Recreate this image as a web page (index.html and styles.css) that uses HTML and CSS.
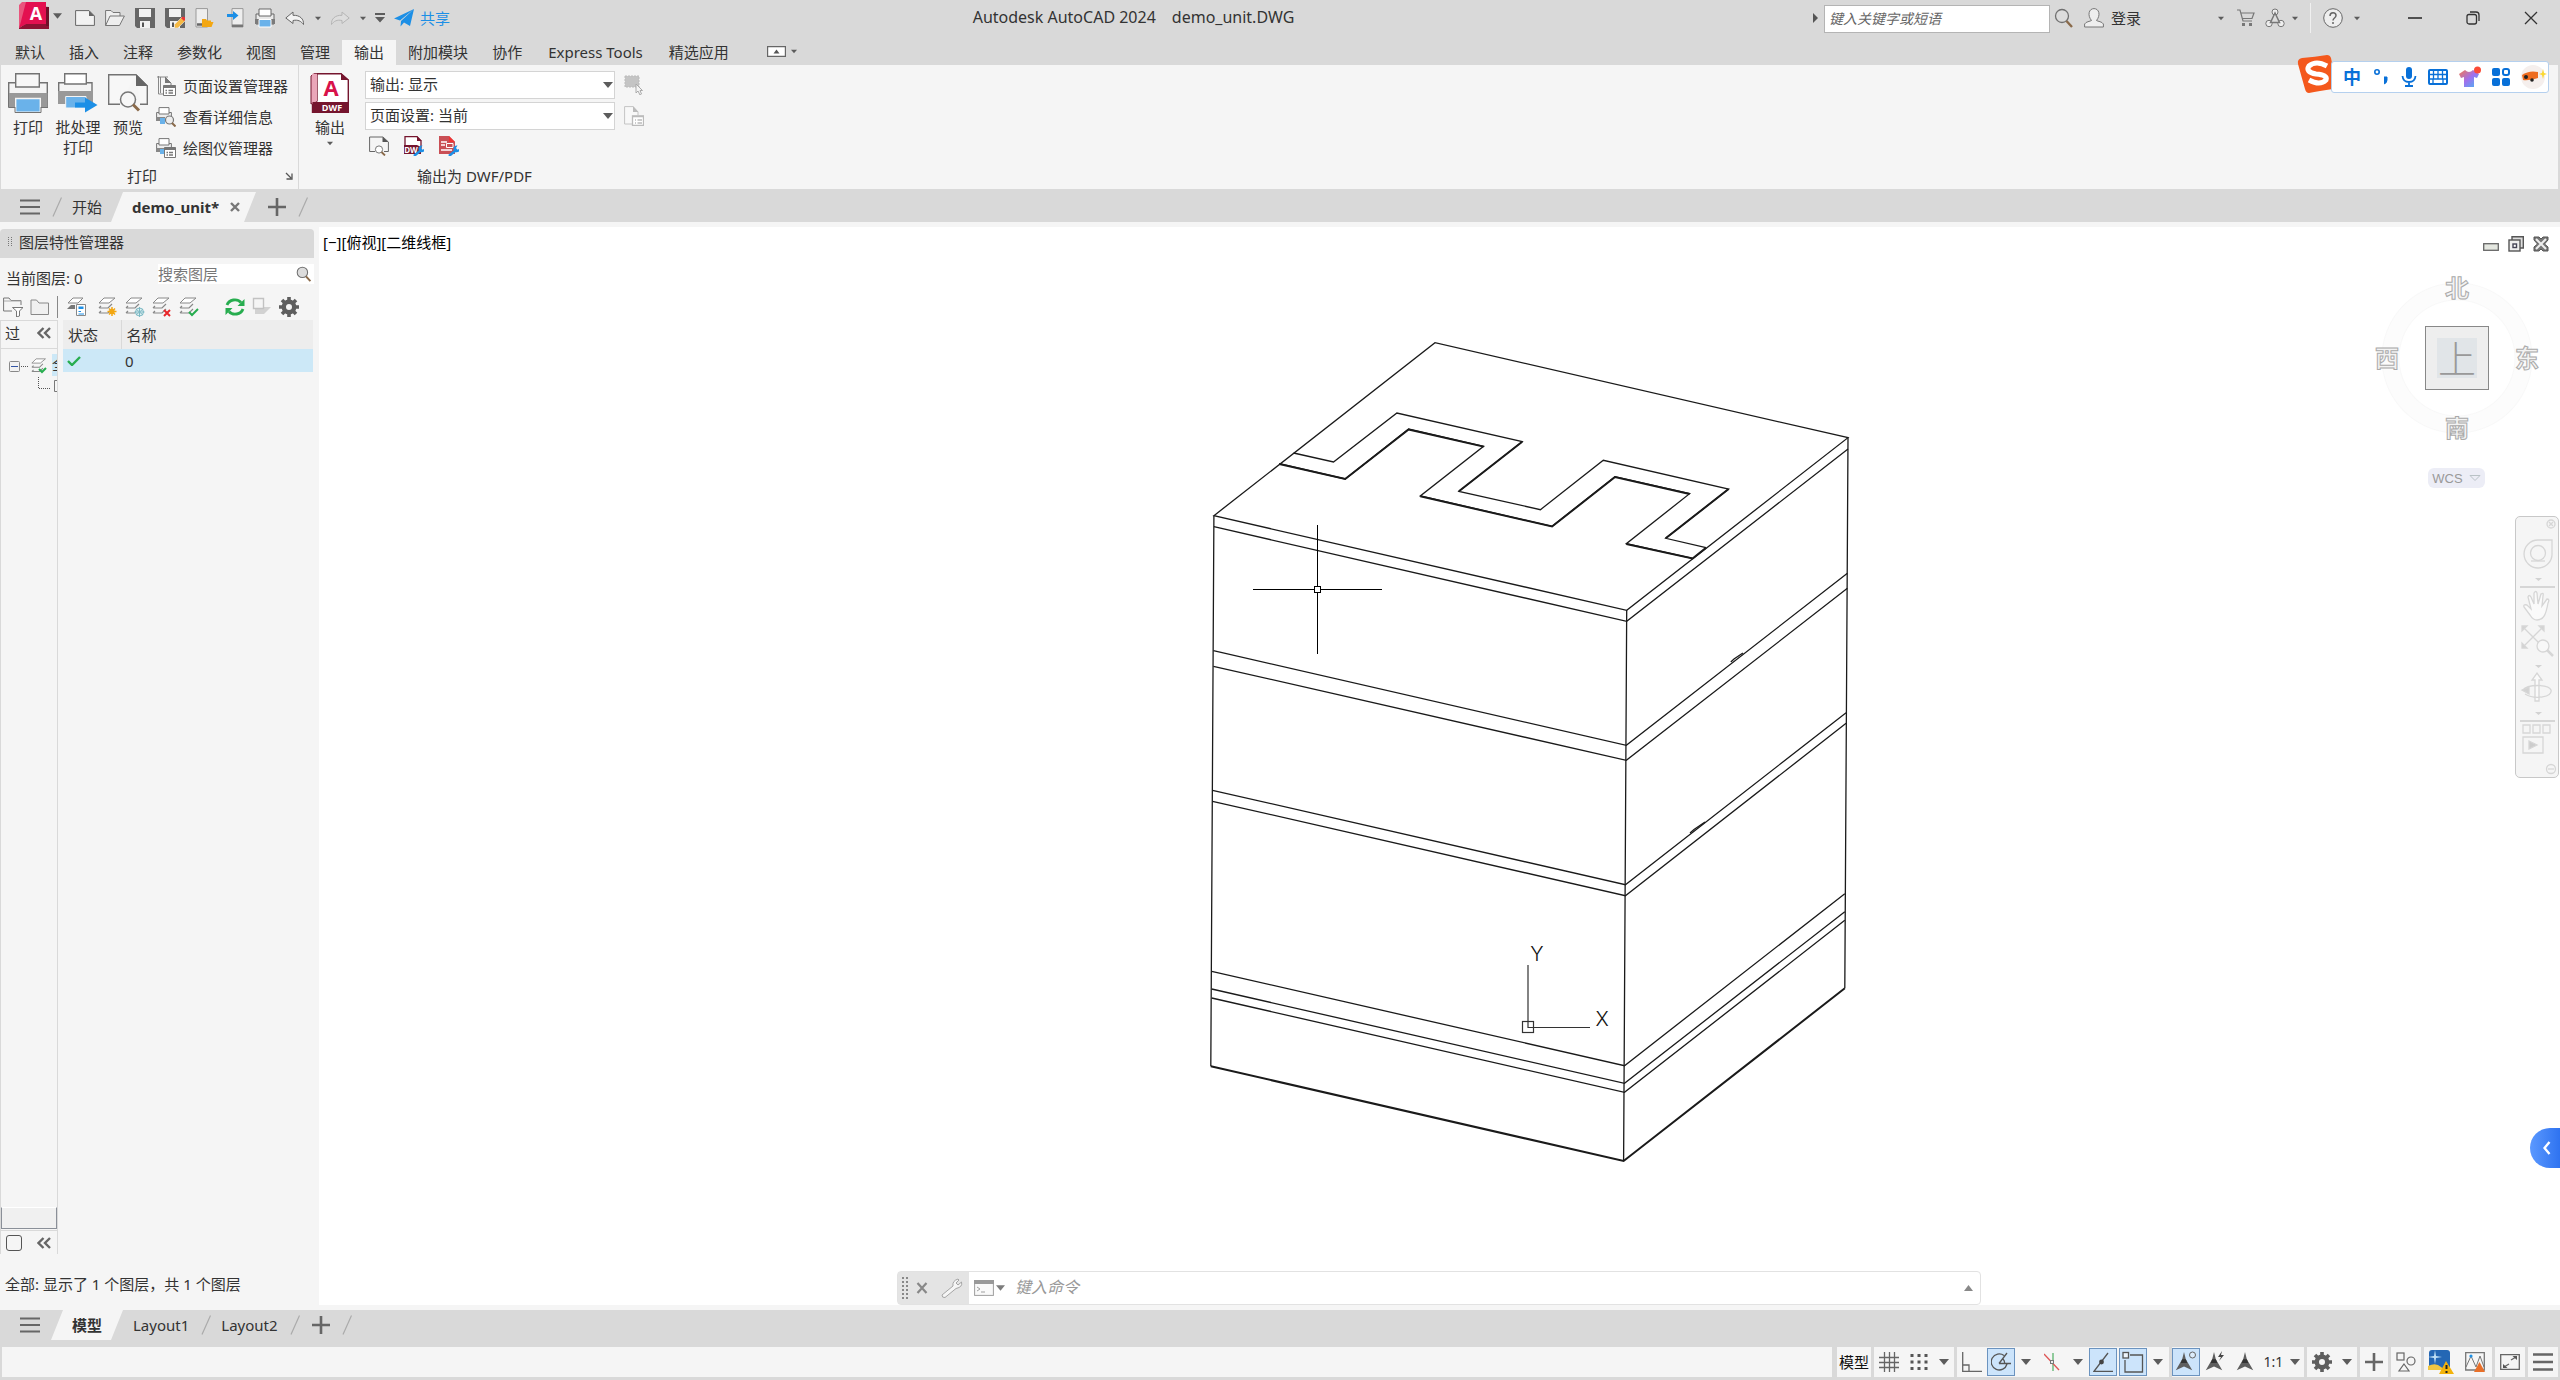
FILE: index.html
```html
<!DOCTYPE html>
<html lang="zh-CN">
<head>
<meta charset="utf-8">
<title>Autodesk AutoCAD 2024 - demo_unit.DWG</title>
<link rel="stylesheet" href="styles.css">
</head>
<body>
<svg class="sprite" aria-hidden="true">
  <symbol id="caret" viewBox="0 0 10 6"><path d="M0 0H10L5 6Z" fill="#5c5c5c"/></symbol>
  <symbol id="menu" viewBox="0 0 20 16"><path d="M0 1.5H20M0 8H20M0 14.5H20" stroke="#666" stroke-width="2.2"/></symbol>
  <symbol id="plus" viewBox="0 0 18 18"><path d="M9 0V18M0 9H18" stroke="#666" stroke-width="2.6"/></symbol>
  <symbol id="slash" viewBox="0 0 10 20"><path d="M9.500 .5L1 19.500" stroke="#aaa" stroke-width="1.200"/></symbol>
  <symbol id="new" viewBox="0 0 20 20"><path d="M.6 2.600H14L19.400 8V17.400H.6Z" fill="#f2f2f2" stroke="#666"/><path d="M14 2.600V8H19.400Z" fill="#666"/></symbol>
  <symbol id="open" viewBox="0 0 20 20"><path d="M.6 17.500V2.500H6L8 4.500H15V8M.6 17.500L5 8H19.400L14.500 17.500Z" fill="#eee" stroke="#777"/></symbol>
  <symbol id="save" viewBox="0 0 20 20"><path d="M0 0H20V20H2L0 18Z" fill="#666"/><path d="M4 1H16V9H4Z" fill="#f2f2f2"/><path d="M5 13H15V20H5Z" fill="#f2f2f2"/><path d="M7 14.500H9V19H7Z" fill="#555"/></symbol>
  <symbol id="saveas" viewBox="0 0 20 20"><use href="#save"/><path d="M17 9L20.500 12.500L13 20H9.500V16.500Z" fill="#f5b944" stroke="#e9e9e9" stroke-width=".6"/><path d="M16 10L19 13L20 12V9.500L18 8.500Z" fill="#e33"/></symbol>
  <symbol id="docopen" viewBox="0 0 20 20"><path d="M1 .6H12.500V19H1Z" fill="#eee" stroke="#999"/><path d="M2 16.500H10" stroke="#666" stroke-width="2.500"/><path d="M7 11H11L12 12.500H16V14H18.500L16.500 19H7Z" fill="#f3a712"/></symbol>
  <symbol id="tophone" viewBox="0 0 20 20"><path d="M7 .6H18V19H7Z" fill="#eee" stroke="#999"/><path d="M7 16.500H18V19H7Z" fill="#777"/><path d="M2 6H8V3L13.500 7.500L8 12V9H2Z" fill="#1c8fe6"/></symbol>
  <symbol id="printer" viewBox="0 0 20 20"><path d="M1 6H19V16H1Z" fill="#e9e9e9" stroke="#666"/><path d="M4 1H16V8H4Z" fill="#fff" stroke="#666"/><path d="M0 11H20V16H0Z" fill="#7b7b7b"/><path d="M4 11.500H16V19H4Z" fill="#6ab2ea" stroke="#fff"/></symbol>
  <symbol id="undo" viewBox="0 0 20 20"><path d="M8 4L.8 10L8 15.500V12.500C13 11.500 16 13 18.500 16.500C19 11 15 7 8 7.300Z" fill="#f3f3f3" stroke="#666"/></symbol>
  <symbol id="redo" viewBox="0 0 20 20"><path d="M12 4L19.200 10L12 15.500V12.500C7 11.500 4 13 1.500 16.500C1 11 5 7 12 7.300Z" fill="#ddd" stroke="#b5b5b5"/></symbol>
  <symbol id="custom" viewBox="0 0 10 10"><path d="M0 0H10V2H0ZM0 4H10L5 9.500Z" fill="#5c5c5c"/></symbol>
  <symbol id="plane" viewBox="0 0 20 18"><path d="M20 0L0 9.500L6 11.500ZM20 0L7 12L6.500 17.500L10 13.500L16 17Z" fill="#1c8fe6"/></symbol>
  <symbol id="lens" viewBox="0 0 20 20"><circle cx="8" cy="8" r="6.500" fill="#dcdcdc" stroke="#707070" stroke-width="1.300"/><path d="M12.500 13L18 19" stroke="#8a6a4a" stroke-width="2.400"/></symbol>
  <symbol id="user" viewBox="0 0 20 20"><path d="M.6 19V16C2 13.500 6 13.500 7.500 12.500C3 7 5 .6 10 .6S17 7 12.500 12.500C14 13.500 18 13.500 19.400 16V19Z" fill="#eee" stroke="#777"/></symbol>
  <symbol id="cart" viewBox="0 0 18 18"><path d="M0 1H3L6 12H15M4 4H17L15 9.500H5.500" fill="none" stroke="#777" stroke-width="1.200"/><path d="M5 14H8V17H5ZM12 14H15V17H12Z" fill="#777"/></symbol>
  <symbol id="tri" viewBox="0 0 20 20"><circle cx="10" cy="4" r="3" fill="#eee" stroke="#777"/><circle cx="4" cy="15.500" r="3.200" fill="#eee" stroke="#777"/><circle cx="16" cy="15.500" r="3.200" fill="#eee" stroke="#777"/><path d="M10 5L5.500 14.500H14.500Z" fill="#ddd" stroke="#777" stroke-width="1.500"/></symbol>
  <symbol id="help" viewBox="0 0 20 20"><circle cx="10" cy="10" r="9.300" fill="#eee" stroke="#666"/><path d="M7 8C7 3.500 13 4 13 7.500C13 10 10 10 10 12.500M10 14V16" fill="none" stroke="#666" stroke-width="1.500"/></symbol>
  <symbol id="bigprint" viewBox="0 0 40 40"><path d="M.7 9.700H39.300V22H.7Z" fill="#f4f4f4" stroke="#737373" stroke-width="1.400"/><path d="M7.700 .7H31.300V14H7.700Z" fill="#f7f7f7" stroke="#737373" stroke-width="1.400"/><path d="M0 20H40V34H0Z" fill="#999"/><path d="M7.700 25.500H32.300V39.300H7.700Z" fill="#6ab2ea" stroke="#f5f5f5" stroke-width="1.400"/><path d="M.5 20V34.500H7M40 20V34.500H33M7 34V39.500H33V34" fill="none" stroke="#737373"/></symbol>
  <symbol id="batch" viewBox="0 0 40 40"><path d="M.7 9.700H34V20H.7Z" fill="#f4f4f4" stroke="#737373" stroke-width="1.400"/><path d="M6.700 .7H28.300V11H6.700Z" fill="#fff" stroke="#737373" stroke-width="1.400"/><path d="M0 18H35V31H0Z" fill="#999"/><path d="M7.700 23.500H28V35H7.700Z" fill="#6ab2ea" stroke="#f5f5f5"/><path d="M17 29.500H27V24.500L39.500 32L27 39.500V34.500H17Z" fill="#1c8fe6"/></symbol>
  <symbol id="preview" viewBox="0 0 40 40"><path d="M28 1.700H.7V31.300H12M28 1.700L39.300 13V31.300H32" fill="#f7f7f7" stroke="#737373" stroke-width="1.400"/><path d="M28 1V13H40Z" fill="#666"/><circle cx="20" cy="26.500" r="7.500" fill="#f7f7f7" stroke="#777" stroke-width="1.500"/><path d="M25 31.500L31 37.500" stroke="#8a6a4a" stroke-width="3"/></symbol>
  <symbol id="pagesetup" viewBox="0 0 20 20"><path d="M2.500 0V18H7M1 1H12M4.500 1V17" fill="none" stroke="#888"/><path d="M9 1L15 7V9" fill="#fff" stroke="#777"/><path d="M9 1V7H15Z" fill="#777"/><path d="M7.500 9.500H19.500V19.500H7.500Z" fill="#fff" stroke="#777"/><path d="M7.500 9.500H19.500V12H7.500Z" fill="#777"/><path d="M9.500 14.500H11M12.500 14.500H17M9.500 17H11M12.500 17H17" stroke="#777" stroke-width="1.300"/></symbol>
  <symbol id="details" viewBox="0 0 20 20"><path d="M.6 5.500H15.400V13H.6Z" fill="#eee" stroke="#777"/><path d="M3 .6H13V7H3Z" fill="#fff" stroke="#777"/><path d="M0 10H9V14H0Z" fill="#888"/><path d="M4 11H9V17H4Z" fill="#6ab2ea"/><circle cx="13.500" cy="13" r="4" fill="#eee" stroke="#777" stroke-width="1.200"/><path d="M16 16L19.500 19.500" stroke="#8a6a4a" stroke-width="2"/></symbol>
  <symbol id="plotter" viewBox="0 0 20 20"><path d="M.6 5.500H15.400V13H.6Z" fill="#eee" stroke="#777"/><path d="M3 .6H13V7H3Z" fill="#fff" stroke="#777"/><path d="M0 10H9V14H0Z" fill="#888"/><path d="M4 11H8V16H4Z" fill="#6ab2ea"/><path d="M8.500 9.500H19.500V19.500H8.500Z" fill="#fff" stroke="#777"/><path d="M8.500 9.500H19.500V12H8.500Z" fill="#777"/><path d="M10.500 14.500H12M13 14.500H17M10.500 17H12M13 17H17" stroke="#777" stroke-width="1.300"/></symbol>
  <symbol id="launch" viewBox="0 0 8 8"><path d="M1 1L6 6M7 1.500V7H1.500" fill="none" stroke="#555" stroke-width="1.300"/></symbol>
  <symbol id="smallpreview" viewBox="0 0 20 20"><path d="M14 1H.6V15.500H6M14 1L19.400 6V15.500H15" fill="none" stroke="#666"/><path d="M13.500 1V6H19.500Z" fill="#555"/><circle cx="10" cy="13.500" r="3.600" fill="#fff" stroke="#777"/><path d="M12.500 16L16 19.500" stroke="#8a6a4a" stroke-width="1.800"/></symbol>
  <symbol id="wrench" viewBox="0 0 12 12"><path d="M1 11L7.500 5.500" fill="none" stroke="#1c8fe6" stroke-width="2.500"/><path d="M5.500 4.500C5 2 7 0 9.500 .5L8 3L9.500 4.800L12 3.500C12.500 6.500 9.500 8 7 7Z" fill="#1c8fe6"/></symbol>
  <symbol id="pdf" viewBox="0 0 20 20"><path d="M0 0H10L16 6V18H0Z" fill="#c94f55"/><path d="M10 0V6H16Z" fill="#e33"/><path d="M2 6H8M2 9H6M2 14H13" stroke="#fff" stroke-width="1.300"/><path d="M7.500 7.500H14V11.500H7.500Z" fill="#c94f55" stroke="#fff"/><use href="#wrench" x="9" y="9" width="12" height="12"/></symbol>
  <symbol id="pick" viewBox="0 0 20 20"><path d="M1 1H15V12H1Z" fill="#c4c4c4" stroke="#bbb" stroke-dasharray="2 1"/><path d="M12 9V18L14 16L16 20L17.500 19L16 15.500H18.500Z" fill="#f4f4f4" stroke="#aaa"/></symbol>
  <symbol id="pagegray" viewBox="0 0 20 20"><path d="M8 18H.6V.6H9L14 6V9" fill="#f8f8f8" stroke="#c4c4c4"/><path d="M9 0V6H14.500Z" fill="#bbb"/><path d="M8.500 10H19.500V19.500H8.500Z" fill="#fff" stroke="#bbb" stroke-width="1.300"/><path d="M8 10.500H20M11 14H12M13.500 14H18M11 17H12M13.500 17H18" stroke="#bbb" stroke-width="1.300"/></symbol>
  <symbol id="layers" viewBox="0 0 20 20"><path d="M6 1H17L11 6H1Z" fill="#fff" stroke="#888"/><path d="M1 11H10L14 7M1 16H10L14 12M3 9L1 11M3 14L1 16" fill="none" stroke="#888" stroke-width="1.200"/></symbol>
  <symbol id="layerstate" viewBox="0 0 20 20"><path d="M6 1H16L11 6H1Z" fill="#fff" stroke="#888"/><path d="M4 8L0 12H8V8Z" fill="#777"/><path d="M9.500 7.500H18.500V18.500H9.500Z" fill="#fff" stroke="#888"/><path d="M11.500 9.500H16.500V12H11.500Z" fill="#1c8fe6"/><path d="M11.500 14.500H14M11.500 17H17" stroke="#1c8fe6"/></symbol>
  <symbol id="ffilter" viewBox="0 0 20 20"><path d="M9 14H.6V1H6L8 3.500H18V8" fill="none" stroke="#777"/><path d="M1 4H18" stroke="#aaa"/><path d="M9.500 10.500H20L16.500 14V19L13.500 20V14Z" fill="#fff" stroke="#777"/></symbol>
  <symbol id="folder" viewBox="0 0 20 20"><path d="M1 17.500V3H6.500L9 6H18.500V17.500Z" fill="#f0f0f0" stroke="#888"/></symbol>
  <symbol id="refresh" viewBox="0 0 20 18"><path d="M2 7C4 1.500 12 0 16 4.500M18 11C16 16.500 8 18 4 13.500" fill="none" stroke="#27ad4f" stroke-width="2.800"/><path d="M19.500 1V8H12.500ZM.5 17V10H7.500Z" fill="#27ad4f"/></symbol>
  <symbol id="overlay" viewBox="0 0 20 20"><path d="M10 10H19L12 17H3V11Z" fill="#d2d2d2"/><path d="M1.500 1.500H11.500V11.500H1.500Z" fill="#f5f5f5" stroke="#c2c2c2" stroke-width="1.400"/></symbol>
  <symbol id="gear" viewBox="0 0 20 20"><circle cx="10" cy="10" r="5.200" fill="none" stroke="#5e5e5e" stroke-width="4.400"/><path d="M10 0V4M10 16V20M0 10H4M16 10H20M3 3L5.500 5.500M14.500 14.500L17 17M17 3L14.500 5.500M5.500 14.500L3 17" stroke="#5e5e5e" stroke-width="3.600"/></symbol>
  <symbol id="laquo" viewBox="0 0 14 12"><path d="M6.500 1L1.500 6L6.500 11M13 1L8 6L13 11" fill="none" stroke="#666" stroke-width="2.400"/></symbol>
  <symbol id="check" viewBox="0 0 14 10"><path d="M1 5L5 9L13 1" fill="none" stroke="#27ad4f" stroke-width="2.400"/></symbol>
  <symbol id="person" viewBox="0 0 20 24"><path d="M10 1L8 9L1 21L10 17L19 21L12 9Z" fill="#5e5e5e"/><path d="M8 9H12L13.500 13H6.500Z" fill="#333"/></symbol>
</svg>

<header class="titlebar">
  <button class="app" aria-label="应用程序菜单"><svg width="30" height="28" viewBox="0 0 30 28"><path d="M3 3L30 5V27H3Z" fill="#6f0f28"/><path d="M0 26V3L3 0H8V24H3Z" fill="#e9557d"/><path d="M7 0H27V22H7L0 26L1 23Z" fill="#e31050"/><path d="M0 26L7 22H27V24H30V27H0Z" fill="#8d1233"/><text x="17" y="18" class="logo-letter">A</text></svg><svg class="caret" width="9" height="6"><use href="#caret"/></svg></button>
  <nav class="quick" aria-label="快速访问">
    <button aria-label="新建"><svg><use href="#new"/></svg></button>
    <button aria-label="打开"><svg><use href="#open"/></svg></button>
    <button aria-label="保存"><svg><use href="#save"/></svg></button>
    <button aria-label="另存为"><svg><use href="#saveas"/></svg></button>
    <button aria-label="从移动端打开"><svg><use href="#docopen"/></svg></button>
    <button aria-label="保存到移动端"><svg><use href="#tophone"/></svg></button>
    <button aria-label="打印"><svg><use href="#printer"/></svg></button>
    <button aria-label="放弃"><svg><use href="#undo"/></svg></button>
    <button class="narrow" aria-label="放弃列表"><svg><use href="#caret"/></svg></button>
    <button aria-label="重做"><svg><use href="#redo"/></svg></button>
    <button class="narrow" aria-label="重做列表"><svg><use href="#caret"/></svg></button>
    <button class="customize" aria-label="自定义"><svg><use href="#custom"/></svg></button>
    <button class="share"><svg><use href="#plane"/></svg>共享</button>
  </nav>
  <h1 class="doc-title"><span>Autodesk AutoCAD 2024</span><span>demo_unit.DWG</span></h1>
  <div class="account">
    <svg width="5" height="10" viewBox="0 0 5 10"><path d="M0 0L5 5L0 10Z" fill="#555"/></svg>
    <input class="help-search" type="text" placeholder="键入关键字或短语" aria-label="键入关键字或短语">
    <button aria-label="搜索"><svg width="20" height="20"><use href="#lens"/></svg></button>
    <button class="login"><svg width="20" height="20"><use href="#user"/></svg>登录<svg class="tiny" width="6" height="5"><use href="#caret"/></svg></button>
    <button class="cart" aria-label="应用商店"><svg width="18" height="18"><use href="#cart"/></svg></button>
    <button class="apps" aria-label="Autodesk"><svg width="20" height="20"><use href="#tri"/></svg><svg class="tiny" width="6" height="5"><use href="#caret"/></svg></button>
    <button class="help" aria-label="帮助"><svg width="20" height="20"><use href="#help"/></svg><svg class="tiny" width="6" height="5"><use href="#caret"/></svg></button>
  </div>
  <div class="win">
    <button aria-label="最小化"><svg width="14" height="14" viewBox="0 0 14 14"><path d="M0 7H14" stroke="#222" stroke-width="1.500"/></svg></button>
    <button aria-label="还原"><svg width="14" height="14" viewBox="0 0 14 14"><rect x="1" y="3.500" width="9.500" height="9.500" rx="2" fill="none" stroke="#333" stroke-width="1.300"/><path d="M4 1H10Q13 1 13 4V10" fill="none" stroke="#333" stroke-width="1.300"/></svg></button>
    <button aria-label="关闭"><svg width="14" height="14" viewBox="0 0 14 14"><path d="M1 1L13 13M13 1L1 13" stroke="#333" stroke-width="1.300"/></svg></button>
  </div>
</header>

<nav class="ribbon-tabs">
  <button>默认</button><button>插入</button><button>注释</button><button>参数化</button><button>视图</button><button>管理</button><button class="active">输出</button><button>附加模块</button><button>协作</button><button class="wide-tab">Express Tools</button><button>精选应用</button>
  <button class="collapse" aria-label="最小化功能区"><svg width="19" height="11" viewBox="0 0 19 11"><path d="M.6 .6H18.400V10.400H.6Z" fill="#fff" stroke="#666" stroke-width="1.200"/><path d="M6.500 7.500H12.500L9.500 3.500Z" fill="#555"/></svg><svg width="6" height="5"><use href="#caret"/></svg></button>
</nav>

<section class="ribbon">
  <div class="panel print-panel">
    <div class="tools">
      <button class="big"><svg><use href="#bigprint"/></svg>打印</button>
      <button class="big"><svg><use href="#batch"/></svg>批处理<br>打印</button>
      <button class="big"><svg><use href="#preview"/></svg>预览</button>
      <div class="list">
        <button><svg><use href="#pagesetup"/></svg>页面设置管理器</button>
        <button><svg><use href="#details"/></svg>查看详细信息</button>
        <button><svg><use href="#plotter"/></svg>绘图仪管理器</button>
      </div>
    </div>
    <div class="panel-name"><span>打印</span><svg width="8" height="8"><use href="#launch"/></svg></div>
  </div>
  <div class="panel export-panel">
    <div class="tools">
      <button class="big dwf"><svg viewBox="0 0 38 40"><path d="M4 0L0 3V31L4 29Z" fill="#eaa6b9" stroke="#75152e"/><path d="M4 .7H30L37.300 7V39.300H1.500V31L6 28V.7" fill="#fff" stroke="#75152e" stroke-width="1.400"/><path d="M1 .7H6V28L1 31Z" fill="#eaa6b9"/><path d="M30 0V7H38Z" fill="#75152e"/><path d="M1.500 29H38V40H1.500Z" fill="#75152e"/><text x="20" y="23" class="dwf-a">A</text><text x="21" y="38" class="dwf-t">DWF</text></svg>输出<svg class="drop"><use href="#caret"/></svg></button>
      <div class="fields">
        <div class="field"><span class="pick-box"><select aria-label="输出"><option>输出: 显示</option></select><svg><use href="#caret"/></svg></span><button aria-label="选择窗口"><svg><use href="#pick"/></svg></button></div>
        <div class="field"><span class="pick-box"><select aria-label="页面设置"><option>页面设置: 当前</option></select><svg><use href="#caret"/></svg></span><button aria-label="页面设置替代"><svg><use href="#pagegray"/></svg></button></div>
        <div class="mini">
          <button aria-label="预览"><svg><use href="#smallpreview"/></svg></button>
          <button aria-label="DWF 选项"><svg viewBox="0 0 20 20"><path d="M1 .7H13L17 5V12H1Z" fill="#fff" stroke="#75152e" stroke-width="1.300"/><path d="M13 0V5H18Z" fill="#75152e"/><path d="M0 9H13L17 11V18H0Z" fill="#75152e"/><text x="7" y="17" class="dw-t">DW</text><use href="#wrench" x="9" y="9" width="12" height="12"/></svg></button>
          <button aria-label="PDF 选项"><svg><use href="#pdf"/></svg></button>
        </div>
      </div>
    </div>
    <div class="panel-name"><span>输出为 DWF/PDF</span></div>
  </div>
</section>

<nav class="file-tabs">
  <button class="burger" aria-label="文件选项卡菜单"><svg width="20" height="16"><use href="#menu"/></svg></button>
  <svg class="slash"><use href="#slash"/></svg>
  <button class="start">开始</button>
  <div class="tab current"><button class="name">demo_unit*</button><button aria-label="关闭选项卡"><svg width="10" height="10" viewBox="0 0 10 10"><path d="M1 1L9 9M9 1L1 9" stroke="#777" stroke-width="2.400"/></svg></button></div>
  <button class="add" aria-label="新选项卡"><svg width="18" height="18"><use href="#plus"/></svg></button>
  <svg class="slash"><use href="#slash"/></svg>
</nav>

<main class="workspace">
  <aside class="layers">
    <h2><svg width="4" height="10" viewBox="0 0 4 10"><path d="M.5 0V10M3.500 0V10" stroke="#777" stroke-dasharray="1 1"/></svg>图层特性管理器</h2>
    <div class="layer-top"><span>当前图层: 0</span><label class="layer-search"><input type="text" placeholder="搜索图层" aria-label="搜索图层"><svg width="16" height="16"><use href="#lens"/></svg></label></div>
    <div class="layer-tools">
      <button aria-label="新建特性过滤器"><svg><use href="#ffilter"/></svg></button>
      <button aria-label="新建组过滤器"><svg><use href="#folder"/></svg></button>
      <i class="bar"></i>
      <button class="state" aria-label="图层状态"><svg><use href="#layerstate"/></svg></button>
      <button aria-label="新建图层"><svg viewBox="0 0 20 20"><use href="#layers"/><path d="M14 10V19M9.500 14.500H18.500M11 11.500L17 17.500M17 11.500L11 17.500" stroke="#f3a712" stroke-width="1.500"/><circle cx="14" cy="14.500" r="2.600" fill="#f3a712"/></svg></button>
      <button aria-label="冻结的新图层"><svg viewBox="0 0 20 20"><use href="#layers"/><circle cx="14.500" cy="15" r="4" fill="#e3f1f3" stroke="#7cb9c4"/><path d="M14.500 10V20M9.500 15H19.500M11 12L18 18M18 12L11 18" stroke="#7cb9c4"/></svg></button>
      <button aria-label="删除图层"><svg viewBox="0 0 20 20"><use href="#layers"/><path d="M12 13L18 19M18 13L12 19" stroke="#e8262a" stroke-width="2"/></svg></button>
      <button aria-label="置为当前"><svg viewBox="0 0 20 20"><use href="#layers"/><path d="M10 15L13 18L19 12" fill="none" stroke="#27ad4f" stroke-width="2"/></svg></button>
      <button class="push" aria-label="刷新"><svg><use href="#refresh"/></svg></button>
      <button aria-label="叠加"><svg><use href="#overlay"/></svg></button>
      <button aria-label="设置"><svg><use href="#gear"/></svg></button>
    </div>
    <div class="layer-body">
      <div class="tree">
        <div class="tree-head"><span>过</span><button aria-label="折叠"><svg width="14" height="12"><use href="#laquo"/></svg></button></div>
        <div class="tree-list">
          <svg width="56" height="44" viewBox="0 0 56 44"><rect x="8.500" y="12.500" width="10" height="10" rx="1" fill="#f2f2f2" stroke="#888"/><path d="M10 17.500H17" stroke="#3355a5"/><path d="M20 17.500H28M37.500 28V39.500H50" fill="none" stroke="#555" stroke-dasharray="1 1"/><use href="#layers" x="30" y="9" width="17" height="17"/><path d="M38 20L41 23L45 19" fill="none" stroke="#27ad4f" stroke-width="2"/><path d="M56 31.500H53.500V42.500H56" fill="none" stroke="#777"/></svg>
          <span class="all">全部</span>
        </div>
        <div class="tree-scroll"></div>
        <div class="tree-foot"><input type="checkbox" aria-label="反转过滤器"><button aria-label="折叠过滤器"><svg width="14" height="12"><use href="#laquo"/></svg></button></div>
      </div>
      <table class="layer-table">
        <thead><tr><th class="state-col">状态</th><th>名称</th></tr></thead>
        <tbody><tr><td><svg width="14" height="10"><use href="#check"/></svg></td><td>0</td></tr></tbody>
      </table>
    </div>
    <p class="summary">全部: 显示了 1 个图层，共 1 个图层</p>
  </aside>

  <section class="canvas">
    <svg class="drawing" viewBox="319 227 2241 1078" preserveAspectRatio="xMinYMin meet" aria-label="三维模型">
      <g class="thin">
        <path d="M1213.900 515.700L1435 342.700L1848 437.700L1626.700 610.300Z"/>
        <path d="M1213.900 526.700L1626.700 621.300L1848 449"/>
        <path d="M1213.400 650.700L1626.300 745.300L1847.400 573.300M1213.400 666.300L1626.300 760.300L1847.400 588.300"/>
        <path d="M1212.500 790.300L1625.400 884.700L1846.100 712.700M1212.500 801.300L1625.400 895.700L1846.100 723.300"/>
        <path d="M1211.700 971.300L1624.500 1065.700L1844.800 893.700M1211.700 989L1624.500 1083.300L1844.800 911.700M1211.700 998L1624.500 1092.300L1844.800 920.300"/>
        <path d="M1213.900 515.700L1210.800 1066.300M1626.700 610.300L1623.600 1161M1848 437.700L1844.800 988.300"/>
        <path d="M1293.600 453L1333.500 462L1396.900 413L1522.200 441.700L1458.900 491.300L1540.400 509.700L1603.300 460.300L1728.600 489L1665.700 538.300L1706 547.700"/>
        <path d="M1279.300 463.700L1345.200 479L1408.600 429L1483.600 446.300L1420.300 496L1552.100 526.300L1615 476.700L1689.600 493.700L1626.300 543.700L1692.600 558.300"/>
        <path d="M1730.800 662L1734 659L1742.900 653M1690 833L1694 829.500L1705 822"/>
      </g>
      <g class="thick">
        <path d="M1210.800 1066.300L1623.600 1161L1844.800 988.300"/>
        <path d="M1279.300 464L1345.200 479L1408.600 429.500L1483.600 446.600M1420.300 496.300L1552.100 526.500L1615 477L1689.600 494M1626.300 544L1692.600 558.500L1706 547.700M1522.200 441.700L1458.900 491.300M1728.600 489L1665.700 538.300"/>
      </g>
      <g class="cross"><path d="M1253 589.500H1314M1321 589.500H1382M1317.500 525V586M1317.500 593V654"/><rect x="1314.500" y="586.500" width="6" height="6"/></g>
      <g class="ucs"><path d="M1528 965V1027.500H1590"/><rect x="1522.500" y="1021.500" width="11" height="11"/></g>
      <text x="1537" y="961" class="axis">Y</text><text x="1602" y="1026" class="axis">X</text>
    </svg>
    <div class="view-label">[−][俯视][二维线框]</div>
    <div class="doc-win">
      <button aria-label="最小化图形"><svg width="16" height="16" viewBox="0 0 16 16"><rect x=".7" y="7.700" width="14.600" height="6.600" fill="#e4e7e0" stroke="#666" stroke-width="1.300"/></svg></button>
      <button aria-label="还原图形"><svg width="16" height="16" viewBox="0 0 16 16"><path d="M4 4V.7H15.300V12H12" fill="#ddd" stroke="#555" stroke-width="1.400"/><rect x="1" y="4" width="11" height="11" fill="#eee" stroke="#555" stroke-width="1.400"/><rect x="5" y="8" width="3.500" height="3.500" fill="#fff" stroke="#445" stroke-width="1.400"/></svg></button>
      <button aria-label="关闭图形"><svg width="16" height="16" viewBox="0 0 16 16"><path d="M1 1H6L8 3L10 1H15V4L11.500 8L15 11V15H10L8 13L6 15H1V11L4.500 8L1 4Z" fill="#777" stroke="#555"/><path d="M3 3L13 13M13 3L3 13" stroke="#eee" stroke-width="2"/></svg></button>
    </div>
    <div class="cube">
      <span class="n">北</span><span class="w">西</span><button class="face"><b>上</b></button><span class="e">东</span><span class="s">南</span>
    </div>
    <button class="wcs">WCS <svg width="12" height="6" viewBox="0 0 12 6"><path d="M1 .5H11L6 5.500Z" fill="none" stroke="#b9c2c6"/></svg></button>
    <nav class="navbar" aria-label="导航栏"><svg width="40" height="258" viewBox="0 0 40 258" fill="none" stroke="#d6d6d6" stroke-width="1.300">
      <circle cx="34" cy="6" r="4"/><path d="M32 4L36 8M36 4L32 8"/>
      <path d="M21 22H35V35A14 14 0 1 1 21 22Z"/><circle cx="21" cy="35" r="7.500"/><path d="M14 43H28"/><path d="M18 60H25L21.500 63Z" fill="#d2d2d2" stroke="none"/>
      <path d="M3 69H38M3 203H38" stroke-width="2"/>
      <path d="M13 97L7 89Q6 86 10 87L14 91L11 79Q12 76 14 79L17 86V75Q19 72 20 75L21 86L24 76Q27 74 26 78L25 88L30 81Q33 81 31 85C29 96 27 102 20 102Q16 102 13 97Z" fill="#fafafa"/>
      <path d="M7 110L25 128M25 110L7 128"/><path d="M5 108H10L5 113ZM27 108H22L27 113ZM5 130V125L10 130Z" fill="#d2d2d2"/><circle cx="26" cy="128" r="6" fill="#f8f8f8"/><path d="M30 132L36 138" stroke-width="2.500"/><path d="M18 147H25L21.500 150Z" fill="#d2d2d2" stroke="none"/>
      <path d="M18 183V162H15L20 155L25 162H22V183Z" fill="#fafafa"/><path d="M8 176C18 182 36 179 34 172C32 166 10 166 6 172"/><path d="M5 172L12 169V176Z" fill="#d2d2d2"/><path d="M18 194H25L21.500 197Z" fill="#d2d2d2" stroke="none"/>
      <path d="M6 207H13V215H6ZM16 207H23V215H16ZM26 207H33V215H26ZM6 219H26V235H6Z"/><path d="M12 223L20 227L12 231Z" fill="#ccc"/>
      <circle cx="34" cy="251" r="4.500"/><path d="M31 251H37"/>
    </svg></nav>
    <button class="side-pull" aria-label="展开"><svg width="8" height="14" viewBox="0 0 8 14"><path d="M6.500 1L1.500 7L6.500 13" fill="none" stroke="#fff" stroke-width="2.400"/></svg></button>
    <div class="command">
      <div class="cmd-left"><svg width="6" height="22" viewBox="0 0 6 22"><path d="M1 0V22M5 0V22" stroke="#888" stroke-width="2" stroke-dasharray="2 2"/></svg>
      <button aria-label="关闭命令行"><svg width="12" height="12" viewBox="0 0 12 12"><path d="M1.500 1L10.500 11M10.500 1L1.500 11" stroke="#888" stroke-width="2.200"/></svg></button>
      <button aria-label="自定义命令行"><svg width="22" height="20" viewBox="0 0 22 20"><path d="M1 17L12 8Q11 3 17 1L18 2L15 5L17 7L20.500 4Q22 9 15 10.500L4 19.500Q1 20 1 17Z" fill="#f5f5f5" stroke="#a5a5a5"/></svg></button></div>
      <button class="recent" aria-label="最近使用的命令"><svg width="20" height="16" viewBox="0 0 20 16"><rect x=".6" y=".6" width="18.800" height="14.800" fill="#f8f8f8" stroke="#888"/><path d="M0 0H20V4H0Z" fill="#808080"/><path d="M3 7L6 9L3 11M7 12H11" fill="none" stroke="#888"/></svg><svg width="9" height="6"><use href="#caret"/></svg></button>
      <input type="text" placeholder="键入命令" aria-label="键入命令">
      <button class="up" aria-label="命令历史"><svg width="9" height="6" viewBox="0 0 9 6"><path d="M0 6H9L4.500 0Z" fill="#888"/></svg></button>
    </div>
  </section>
</main>

<nav class="layout-tabs">
  <button class="burger" aria-label="布局菜单"><svg width="20" height="16"><use href="#menu"/></svg></button>
  <button class="tab model">模型</button>
  <button class="layout">Layout1</button><svg class="slash"><use href="#slash"/></svg>
  <button class="layout">Layout2</button><svg class="slash"><use href="#slash"/></svg>
  <button class="add" aria-label="新建布局"><svg width="18" height="18"><use href="#plus"/></svg></button><svg class="slash"><use href="#slash"/></svg>
</nav>

<footer class="status">
  <div class="cell fill"></div>
  <div class="cell"><button class="model-btn">模型</button></div>
  <div class="cell">
    <button class="s30" aria-label="栅格"><svg width="20" height="20" viewBox="0 0 20 20"><path d="M5.500 0V20M10.500 0V20M15.500 0V20M0 5.500H20M0 10.500H20M0 15.500H20" stroke="#666" stroke-width="1.300"/></svg></button>
    <button class="s30" aria-label="捕捉"><svg width="18" height="18" viewBox="0 0 18 18"><path d="M2 1V18M9 1V18M16 1V18" stroke="#555" stroke-width="3" stroke-dasharray="3 3.500"/></svg></button>
    <button class="s20" aria-label="捕捉选项"><svg width="10" height="6"><use href="#caret"/></svg></button>
  </div>
  <div class="cell">
    <button class="s30" aria-label="正交"><svg width="20" height="20" viewBox="0 0 20 20"><path d="M.7 0V19.300H20M.7 13H7V19" fill="none" stroke="#666" stroke-width="1.300"/></svg></button>
    <button class="s28 on" aria-label="极轴"><svg width="20" height="20" viewBox="0 0 20 20"><path d="M13 3.500A8 8 0 1 0 16 12M8 11.500H20M8 11.500L16 1M12 7Q14 9 13.500 12" fill="none" stroke="#555" stroke-width="1.300"/></svg></button>
    <button class="s22" aria-label="极轴选项"><svg width="10" height="6"><use href="#caret"/></svg></button>
    <button class="s30" aria-label="等轴测"><svg width="16" height="18" viewBox="0 0 16 18"><path d="M9 0V18" stroke="#4cae60" stroke-width="1.200"/><path d="M0 1L15 17" stroke="#d55" stroke-width="1.300"/><rect x="6.500" y="7.500" width="3" height="3" fill="#eee" stroke="#777"/></svg></button>
    <button class="s22" aria-label="等轴测选项"><svg width="10" height="6"><use href="#caret"/></svg></button>
    <button class="s28 on" aria-label="对象追踪"><svg width="20" height="20" viewBox="0 0 20 20"><path d="M15 1L1 19.300H20" fill="none" stroke="#555" stroke-width="1.300"/><circle cx="8.500" cy="10" r="2.400" fill="#444"/></svg></button>
    <button class="s28 on gap" aria-label="对象捕捉"><svg width="22" height="22" viewBox="0 0 22 22"><path d="M8 4H20.500V21H3V9" fill="none" stroke="#555" stroke-width="1.300"/><rect x="1" y="1.500" width="5.500" height="5.500" fill="#eef5fc" stroke="#555" stroke-width="1.300"/></svg></button>
    <button class="s22" aria-label="捕捉设置"><svg width="10" height="6"><use href="#caret"/></svg></button>
  </div>
  <div class="cell">
    <button class="s28 on" aria-label="注释可见性"><svg width="22" height="22" viewBox="0 0 22 22"><use href="#person" width="20" height="22" x="-1"/><circle cx="17.500" cy="4" r="3" fill="#dcecfb" stroke="#666"/></svg></button>
    <button class="s30" aria-label="自动缩放"><svg width="22" height="22" viewBox="0 0 22 22"><use href="#person" width="20" height="22"/><path d="M18 0L14 6H17L15 10L20 4H17Z" fill="#444"/></svg></button>
    <button class="s30" aria-label="注释比例"><svg width="20" height="22"><use href="#person"/></svg></button>
    <button class="scale">1:1<svg width="10" height="6"><use href="#caret"/></svg></button>
  </div>
  <div class="cell"><button class="s30" aria-label="切换工作空间"><svg width="20" height="20"><use href="#gear"/></svg></button><button class="s20" aria-label="工作空间列表"><svg width="10" height="6"><use href="#caret"/></svg></button></div>
  <div class="cell"><button class="s28" aria-label="注释监视器"><svg width="18" height="18"><use href="#plus"/></svg></button></div>
  <div class="cell"><button class="s30" aria-label="隔离对象"><svg width="20" height="20" viewBox="0 0 20 20" fill="none" stroke="#666" stroke-width="1.200"><rect x="1" y="1" width="7" height="7"/><circle cx="15" cy="9" r="4"/><path d="M8 12L13 19H3Z"/></svg></button></div>
  <div class="cell wide">
    <button class="s30" aria-label="图形性能"><svg width="26" height="26" viewBox="0 0 26 26"><rect x="1" y="1" width="21" height="19" rx="3" fill="#2467b4"/><path d="M0 17Q8 13 13 18T22 19V21H0Z" fill="#f0c642"/><path d="M7 1L8 7L14 8L8 9L7 15L6 9L0 8L6 7Z" fill="#bfe0f5"/><path d="M18 12L26 25H11Z" fill="#f3b30b"/><path d="M18.500 16V20M18.500 22V24" stroke="#222" stroke-width="2"/></svg></button>
    <button class="s30" aria-label="通知"><svg width="20" height="20" viewBox="0 0 20 20"><path d="M.7 .7H19.300V18H.7Z" fill="#f6f6f6" stroke="#777" stroke-width="1.300"/><path d="M1 15L6 4L11 15L15 4L19 15" fill="none" stroke="#777"/><circle cx="6" cy="4" r="1.600" fill="#1c8fe6"/><path d="M14.500 10L20 20H9Z" fill="#e8702a"/></svg></button>
  </div>
  <div class="cell"><button class="s30" aria-label="全屏"><svg width="20" height="16" viewBox="0 0 20 16"><path d="M.7 .7H19.300V15.300H.7Z" fill="none" stroke="#666" stroke-width="1.300"/><path d="M11 6L16 3M4 13L9 10" stroke="#666" stroke-width="1.400"/><path d="M12.500 2H17V6ZM3 10V14H7.500Z" fill="#555"/></svg></button></div>
  <div class="cell"><button class="s30" aria-label="自定义"><svg width="20" height="18" viewBox="0 0 20 18"><path d="M0 1.500H20M0 9H20M0 16.500H20" stroke="#666" stroke-width="2.400"/></svg></button></div>
</footer>

<div class="ime" aria-label="输入法">
  <svg width="40" height="38" viewBox="0 0 40 38"><path d="M5 3Q18 2 30 0Q33 0 34 3Q36 14 40 29Q40 33 36 34Q22 36 12 38Q9 38 8 34Q4 20 1 9Q0 4 5 3Z" fill="#f4581c"/><path d="M30 11Q19 5 12 11Q8 17 19 19Q31 20 29 25Q23 31 12 25" fill="none" stroke="#fff" stroke-width="5"/></svg>
  <div class="ime-bar">
    <button class="cn">中</button>
    <button aria-label="标点"><svg width="18" height="20" viewBox="0 0 18 20"><circle cx="5" cy="5" r="2.200" fill="none" stroke="#0870d8" stroke-width="1.600"/><path d="M12 10H15V13Q15 16 12 17" fill="#0870d8" stroke="#0870d8"/></svg></button>
    <button aria-label="语音"><svg width="16" height="20" viewBox="0 0 16 20"><rect x="5" y="0" width="6" height="12" rx="3" fill="#0870d8"/><path d="M1.500 9Q2 15 8 15T14.500 9M8 15V19M4 19H12" fill="none" stroke="#0870d8" stroke-width="1.800"/></svg></button>
    <button aria-label="键盘"><svg width="20" height="16" viewBox="0 0 20 16"><rect x="1" y="1" width="18" height="14" rx="1" fill="none" stroke="#0870d8" stroke-width="2"/><path d="M1 5.500H19M1 10H19M5.500 1V10M10 1V10M14.500 1V10M5 10V15M15 10V15" stroke="#0870d8" stroke-width="1.300"/></svg></button>
    <button aria-label="皮肤"><svg width="22" height="22" viewBox="0 0 22 22"><defs><linearGradient id="shirt" x1="0" y1="0" x2="1" y2="1"><stop offset="0" stop-color="#f47a4f"/><stop offset=".5" stop-color="#a070ee"/><stop offset="1" stop-color="#42b8f2"/></linearGradient></defs><path d="M6 4Q10 8 14 4L20 8L18 12L15 11V21H5V11L2 12L0 8Z" fill="url(#shirt)"/><circle cx="18.500" cy="4" r="3.500" fill="#fb4b36"/></svg></button>
    <button aria-label="工具箱"><svg width="18" height="18" viewBox="0 0 18 18"><rect x="0" y="0" width="8" height="8" rx="2" fill="#0870d8"/><rect x="0" y="10" width="8" height="8" rx="2" fill="#0870d8"/><rect x="10" y="10" width="8" height="8" rx="2" fill="#0870d8"/><rect x="11" y="1" width="6" height="6" rx="2" fill="none" stroke="#0870d8" stroke-width="2"/></svg></button>
    <button aria-label="助手"><svg width="26" height="26" viewBox="0 0 26 26"><ellipse cx="12" cy="13" rx="12" ry="12" fill="#f5efed"/><path d="M1 11Q8 6 17 8V14Q7 17 2 16Z" fill="#ee6c20"/><circle cx="5" cy="13" r="2" fill="#222"/><circle cx="11" cy="16" r="1.800" fill="#222"/><path d="M22 5L23 9L26 10L23 11L22 15L21 11L18 10L21 9Z" fill="#fbd82e"/></svg></button>
  </div>
</div>
</body>
</html>
```
FILE: styles.css
```css
* { box-sizing: border-box; }

body {
  margin: 0;
  height: 100vh;
  display: flex;
  flex-direction: column;
  position: relative;
  overflow: hidden;
  background: #f5f5f5;
  color: #333;
  font: 15px/20px "Noto Sans", "Noto Sans CJK SC", sans-serif;
}

button, input, select { font: inherit; color: inherit; }
button { margin: 0; padding: 0; border: 0; background: none; display: flex; align-items: center; justify-content: center; white-space: nowrap; }
svg { display: block; flex: none; }
.sprite { position: absolute; width: 0; height: 0; }
input::placeholder { color: #777; opacity: 1; }

/* title bar */
.titlebar { flex: none; display: flex; height: 40px; padding-bottom: 4px; background: #d9d9d9; }
.app { width: 70px; padding: 0 8px 4px 19px; justify-content: flex-start; gap: 4px; }
.logo-letter { font: 700 18px "Open Sans", sans-serif; fill: #fff; text-anchor: middle; }
.quick { display: flex; }
.quick button { width: 30px; }
.quick button svg { width: 20px; height: 20px; }
.quick .narrow { width: 15px; }
.quick .narrow svg { width: 6px; height: 5px; }
.quick .customize { width: 20px; }
.quick .customize svg { width: 10px; height: 10px; }
.quick .share { width: 64px; gap: 6px; color: #1c8fe6; }
.doc-title { flex: 1; margin: 0; padding-bottom: 2px; display: flex; align-items: center; justify-content: center; gap: 16px; font-size: 16px; font-weight: 400; }
.account { display: flex; align-items: center; gap: 4px; }
.account > svg { margin-right: 2px; }
.help-search { width: 226px; height: 28px; margin-top: 1px; padding: 0 4px; border: 1px solid #b4b4b4; background: #fff; font-size: 14px; font-style: italic; }
.help-search::placeholder { color: #666; }
.login { margin-left: 6px; gap: 7px; }
.login .tiny { margin-left: 70px; }
.cart { margin-left: 9px; }
.apps { margin-left: 6px; gap: 7px; padding-right: 12px; height: 30px; border-right: 1px solid #f0f0f0; }
.help { margin-left: 8px; gap: 11px; }
.win { display: flex; margin-left: 26px; }
.win button { width: 58px; }

/* ribbon */
.ribbon-tabs { flex: none; display: flex; height: 25px; padding-left: 3px; background: #d9d9d9; }
.ribbon-tabs button { padding: 0 12px 2px; }
.ribbon-tabs .wide-tab { padding: 0 14px 2px; }
.ribbon-tabs .active { background: #f5f5f5; }
.ribbon-tabs .collapse { padding-left: 26px; gap: 5px; }
.ribbon { flex: none; display: flex; height: 124px; border: 1px solid #d9d9d9; border-width: 0 2px 0 1px; }
.panel { display: flex; flex-direction: column; justify-content: space-between; padding: 5px 0 3px; }
.print-panel { width: 298px; border-right: 1px solid #d9d9d9; }
.tools { display: flex; }
.big { width: 50px; flex-direction: column; justify-content: flex-start; padding-top: 3px; }
.print-panel .tools { padding-left: 2px; }
.big svg { width: 40px; height: 40px; margin-bottom: 4px; }
.big .drop { width: 6px; height: 5px; margin: 4px 0 0; }
.list { display: grid; grid-auto-rows: 31px; margin-left: 3px; }
.list button { justify-content: flex-start; gap: 7px; }
.list svg { width: 20px; height: 20px; }
.panel-name { display: flex; justify-content: center; align-items: center; }
.print-panel .panel-name { justify-content: flex-end; gap: 128px; padding-right: 5px; }
.export-panel { padding-left: 6px; }
.dwf { width: 50px; }
.dwf-a { font: 700 22px "Open Sans", sans-serif; fill: #d8124a; text-anchor: middle; }
.dwf-t { font: 700 9px "Open Sans", sans-serif; fill: #fff; text-anchor: middle; }
.dw-t { font: 700 8px "Open Sans", sans-serif; fill: #fff; text-anchor: middle; }
.fields { margin: 1px 0 0 10px; display: grid; gap: 3px; }
.field { display: flex; gap: 9px; }
.pick-box { width: 250px; display: grid; grid-template-columns: 1fr 16px; align-items: center; }
.pick-box select { grid-area: 1 / 1 / 2 / 3; height: 28px; padding: 0 4px 2px; appearance: none; background: #fff; border: 1px solid #d4d4d4; border-radius: 0; }
.pick-box svg { grid-area: 1 / 2; width: 10px; height: 6px; margin-left: 4px; pointer-events: none; }
.field button svg, .mini svg { width: 20px; height: 20px; }
.mini { display: flex; gap: 15px; padding: 3px 4px; }

/* tab strips */
.file-tabs { flex: none; display: flex; align-items: flex-end; height: 33px; background: #d9d9d9; }
.file-tabs > button, .layout-tabs > button { height: 30px; }
.burger { width: 20px; margin: 0 12px 0 20px; }
.slash { width: 10px; height: 20px; margin-bottom: 5px; }
.start { padding: 0 10px; }
.tab { height: 30px; background: #f5f5f5; clip-path: polygon(12px 0, 100% 0, calc(100% - 12px) 100%, 0 100%); }
.current { display: flex; width: 145px; margin-left: -1px; padding: 0 16px 0 21px; justify-content: space-between; }
.current .name { font-weight: 700; }
.add { width: 18px; margin: 0 12px; }
.layout-tabs { flex: none; display: flex; height: 34px; background: #d9d9d9; }
.layout-tabs .burger { margin-right: 11px; }
.layout-tabs .model { width: 72px; font-weight: 700; }
.layout { padding: 0 12px 0 10px; }
.layout-tabs .slash { margin-top: 5px; }

/* workspace */
.workspace { flex: 1; min-height: 0; display: flex; padding: 5px 0; }
.layers { width: 314px; margin: 2px 5px 0 0; display: flex; flex-direction: column; }
.layers h2 { margin: 0; height: 29px; padding: 0 0 3px 8px; display: flex; align-items: center; gap: 7px; background: #d9d9d9; border-radius: 4px 4px 0 0; font-size: 15px; font-weight: 400; }
.layer-top { display: flex; justify-content: space-between; height: 37px; padding: 6px 0 0 6px; }
.layer-top > span { padding-top: 4px; }
.layer-search { display: flex; align-items: center; width: 156px; height: 20px; padding-right: 2px; background: #fff; }
.layer-search input { flex: 1; min-width: 0; height: 20px; padding: 0; border: 0; background: none; }
.layer-tools { display: flex; align-items: center; height: 25px; padding: 0 0 2px 3px; gap: 7px; }
.layer-tools button svg { width: 20px; height: 20px; }
.layer-tools .bar { width: 1px; height: 22px; background: #888; }
.layer-tools .state { margin: 0 4px 0 2px; }
.layer-tools .push { margin-left: 19px; }
.layer-body { flex: 1; display: flex; gap: 5px; align-items: flex-start; }
.tree { align-self: stretch; width: 58px; display: flex; flex-direction: column; border: 1px solid #d9d9d9; border-bottom: 0; overflow: hidden; }
.tree-head { display: flex; height: 28px; padding: 0 6px 3px 4px; justify-content: space-between; align-items: center; border-bottom: 1px solid #d9d9d9; }
.tree-list { flex: 1; display: grid; align-content: start; overflow: hidden; }
.tree-list > * { grid-area: 1 / 1; }
.all { width: 5px; height: 22px; margin: 5px 0 0 51px; overflow: hidden; white-space: nowrap; background: #cce8f7; }
.tree-scroll { height: 22px; margin-bottom: 1px; background: #f0f0f0; border: 1px solid #8a8f98; border-top-color: #fff; }
.tree-foot { display: flex; height: 24px; padding: 0 6px 0 5px; justify-content: space-between; align-items: center; border-top: 1px solid #d9d9d9; }
.tree-foot input { appearance: none; width: 16px; height: 16px; margin: 0; border: 1px solid #555; border-radius: 3px; }
.layer-table { width: 250px; border-collapse: collapse; }
.layer-table th { height: 29px; padding: 0 5px; background: #ededed; font-weight: 400; text-align: left; }
.layer-table .state-col { width: 58px; border-right: 1px solid #d9d9d9; }
.layer-table td { height: 23px; padding: 0 4px; background: #cce8f7; }
.summary { margin: 0; padding: 20px 5px 11px; }

.canvas { position: relative; flex: 1; min-width: 0; background: #fff; overflow: hidden; }
.drawing { width: 100%; height: 100%; }
.drawing g { fill: none; stroke: #1a1a1a; }
.drawing .thin { stroke-width: 1.3; }
.drawing .thick { stroke-width: 2; }
.drawing .cross { stroke: #000; }
.drawing .ucs { stroke: #333; stroke-width: 1.2; }
.axis { font: 300 20px Inter, sans-serif; fill: #111; text-anchor: middle; }
.view-label { position: absolute; left: 4px; top: 5px; color: #000; font-size: 15px; }
.doc-win { position: absolute; right: 11px; top: 9px; display: flex; gap: 9px; }
.cube { position: absolute; right: 21px; top: 47px; display: grid; grid-template: 40px 88px 40px / 38px 88px 38px; place-items: center; }
.cube { background: radial-gradient(circle, transparent 57px, #f8f8f8 58px, #fcfcfc 59px, #fcfcfc 74px, #f8f8f8 75px, transparent 76px); }
.cube span { font-size: 24px; line-height: 28px; font-weight: 700; color: #f3f3f3; -webkit-text-stroke: 1px #aaa; }
.cube .n { grid-area: 1 / 2; align-self: start; }
.cube .w { grid-area: 2 / 1; justify-self: start; }
.cube .face { grid-area: 2 / 2; width: 64px; height: 64px; border: 1px solid #888; background: #eee; }
.cube .face b { width: 40px; height: 40px; background: #e1e5e8; color: #999; font-size: 38px; line-height: 40px; font-weight: 300; }
.cube .e { grid-area: 2 / 3; justify-self: end; }
.cube .s { grid-area: 3 / 2; align-self: end; }
.wcs { position: absolute; right: 75px; top: 241px; width: 57px; height: 20px; gap: 6px; border-radius: 6px; background: #ecedf6; color: #999; font: 13px "Liberation Sans", sans-serif; }
.navbar { position: absolute; right: 1px; top: 289px; padding: 1px; border: 1px solid #c8c8c8; border-radius: 5px; background: #f5f5f5; }
.side-pull { position: absolute; right: 0; top: 901px; width: 30px; height: 40px; padding-left: 4px; border-radius: 20px 0 0 20px; background: linear-gradient(90deg, #5b99ff, #2f73f0); }
.command { position: absolute; left: 578px; right: 579px; bottom: 0; height: 34px; display: flex; border: 1px solid #e2e2e2; border-radius: 4px; background: #fff; }
.cmd-left { display: flex; align-items: center; width: 71px; padding-left: 4px; background: #e4e4e4; }
.cmd-left button:nth-of-type(1) { margin: 0 13px 0 8px; }
.recent { gap: 2px; padding: 0 10px 0 5px; opacity: .8; }
.command input { flex: 1; min-width: 0; border: 0; padding: 0 0 2px; background: none; font-size: 16px; font-style: italic; }
.command input::placeholder { color: #999; }
.up { width: 24px; }

/* status bar */
.status { flex: none; display: flex; height: 36px; padding: 3px 2px; gap: 3px; background: #d9d9d9; }
.cell { display: flex; align-items: center; background: #f5f5f5; }
.fill { flex: 1; margin-right: 2px; }
.model-btn { width: 34px; color: #111; }
.s30 { width: 30px; }
.s28 { width: 28px; height: 28px; }
.s22 { width: 22px; }
.s20 { width: 20px; }
.on { background: #cce4fb; border: 1px solid #6b93bf; }
.gap { margin-left: 2px; }
.scale { gap: 7px; width: 44px; font-size: 14px; }
.wide { gap: 4px; padding: 0 2px; }

/* floating input method bar */
.ime { position: absolute; right: 11px; top: 55px; display: flex; }
.ime-bar { display: flex; align-items: center; width: 218px; height: 32px; margin: 6px 0 0 -6px; padding: 0 1px 0 11px; justify-content: space-between; background: #fff; border: 1px solid #b5d0ee; border-radius: 3px; }
.cn { color: #0870d8; font-size: 18px; font-weight: 700; }
```
